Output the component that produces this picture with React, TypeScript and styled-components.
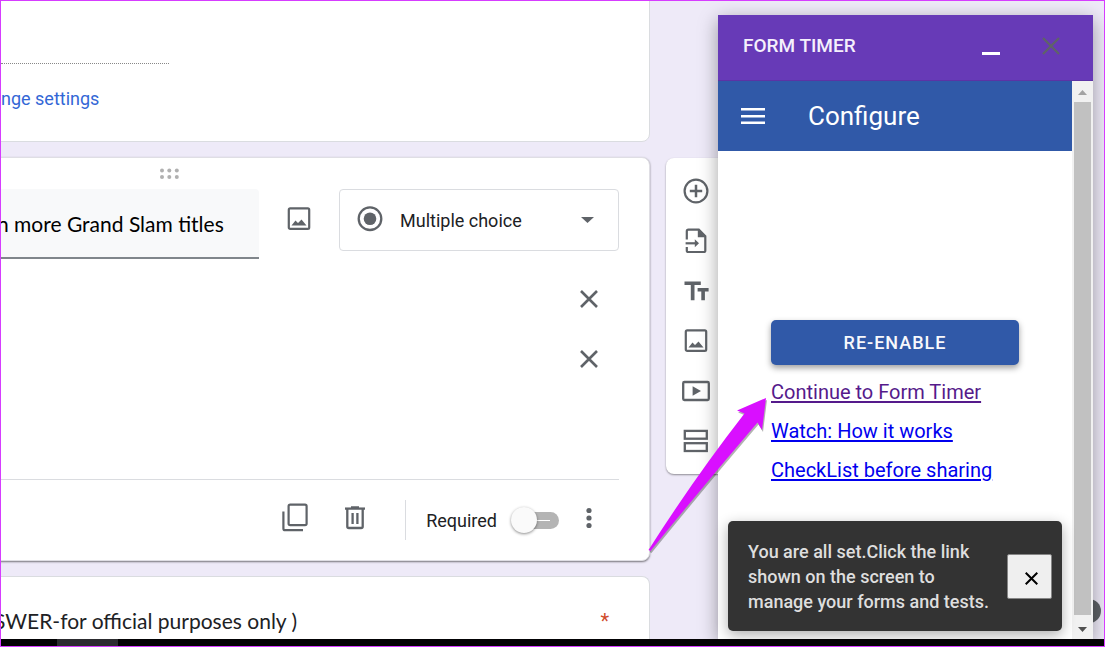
import React from "react";
import styled, { createGlobalStyle } from "styled-components";

const ui = `Roboto, "Liberation Sans", sans-serif`;
const display = `"Google Sans", Lato, "Open Sans", sans-serif`;
const grey = "#5f6368";
const line = "#dadce0";

const GlobalStyle = createGlobalStyle`
  *, *::before, *::after { box-sizing: border-box; }
  body { margin: 0; font-family: ${ui}; color: #202124; }
  button, input, select { font: inherit; color: inherit; }
`;

const Frame = styled.div`
  display: flex;
  flex-direction: column;
  min-height: 100vh;
  border: 1px solid #d63cff;
  overflow: hidden;
`;

const Workspace = styled.main`
  position: relative;
  flex: 1;
  display: grid;
  grid-template-columns: minmax(0, 1fr) 438px;
  column-gap: 16px;
  background: #eeeaf8;
  overflow: hidden;
`;

const FormColumn = styled.div`
  display: flex;
  flex-direction: column;
  gap: 15px;
  margin-left: -8px;
`;

const Card = styled.section<{ $active?: boolean }>`
  background: #fff;
  border: 1px solid ${line};
  border-radius: 8px;
  ${(p) => p.$active && "border-color: #dfdee4; box-shadow: 0 1px 2px rgba(0, 0, 0, 0.5);"}
`;

const SettingsCard = styled(Card)`
  margin-top: -8px;
  padding: 69px 30px 31px 7px;
`;

const AnswerLine = styled.div`
  width: 168px;
  border-bottom: 1px dotted #888;
`;

const SettingsLink = styled.a`
  display: block;
  margin-top: 23px;
  font-size: 18px;
  line-height: 23px;
  color: #3367d6;
  text-decoration: none;
`;

const QuestionCard = styled(Card)`
  padding: 0 30px 0 0;
`;

const DragRow = styled.div`
  display: flex;
  height: 31px;
  padding: 10px 0 0 165px;
`;

const QuestionRow = styled.div`
  display: flex;
  align-items: flex-start;
`;

const QuestionInput = styled.input`
  width: 265px;
  height: 70px;
  padding: 0 0 0 3px;
  border: 0;
  border-bottom: 2px solid #80868b;
  border-radius: 0 4px 0 0;
  background: #f8f9fa;
  color: #000;
  font-family: ${display};
  font-size: 21px;
  outline: 0;
`;

const IconButton = styled.button<{ $w?: number; $h?: number }>`
  display: flex;
  align-items: center;
  justify-content: center;
  width: ${(p) => p.$w ?? 40}px;
  height: ${(p) => p.$h ?? 40}px;
  padding: 0;
  border: 0;
  background: none;
  color: ${grey};
`;

const TypePicker = styled.label`
  display: flex;
  align-items: center;
  flex: 0 0 280px;
  height: 62px;
  margin-left: auto;
  padding: 0 24px 0 17px;
  gap: 17px;
  border: 1px solid ${line};
  border-radius: 4px;
`;

const TypeSelect = styled.select`
  flex: 1;
  min-width: 0;
  padding: 0;
  border: 0;
  appearance: none;
  background: none;
  font-size: 18px;
`;

const Options = styled.div`
  display: flex;
  flex-direction: column;
  align-items: flex-end;
  gap: 20px;
  padding: 20px 10px 100px;
`;

const QuestionFooter = styled.footer`
  display: flex;
  align-items: center;
  justify-content: flex-end;
  height: 81px;
  border-top: 1px solid ${line};
`;

const Separator = styled.span`
  width: 1px;
  height: 40px;
  margin: 0 20px;
  background: ${line};
`;

const RequiredLabel = styled.label`
  display: flex;
  align-items: center;
  gap: 14px;
  font-size: 18px;
`;

const Switch = styled.input`
  appearance: none;
  position: relative;
  width: 48px;
  height: 26px;
  margin: 0;
  &::before {
    content: "";
    position: absolute;
    inset: 5px 0 4px 4px;
    border-radius: 9px;
    background: linear-gradient(#fff, #fff) 21px 8px / 14px 1px no-repeat #b4b4b4;
  }
  &::after {
    content: "";
    position: absolute;
    left: 0;
    top: 0;
    width: 26px;
    height: 26px;
    border-radius: 50%;
    background: #fafafa;
    box-shadow: 0 1px 3px rgba(0, 0, 0, 0.45);
  }
`;

const NextCard = styled(Card)`
  display: flex;
  justify-content: space-between;
  align-items: flex-start;
  flex: 1;
  padding: 30px 40px 0 0;
  border-bottom: 0;
  border-radius: 8px 8px 0 0;
  font-family: ${display};
  font-size: 21px;
  line-height: 28px;
`;

const QuestionTitle = styled.h2`
  margin: 0;
  font: inherit;
`;

const Mark = styled.span`
  font-family: ${ui};
  font-size: 20px;
  color: #d04b2c;
`;

const Rail = styled.nav`
  display: flex;
  flex-direction: column;
  align-items: flex-start;
  align-self: start;
  gap: 10px;
  width: 72px;
  margin-top: 157px;
  padding: 13px 10px;
  border-radius: 8px;
  background: #fff;
  box-shadow: 0 1px 2px rgba(0, 0, 0, 0.4);
`;

const HelpButton = styled.button`
  position: absolute;
  right: 3px;
  bottom: 16px;
  width: 24px;
  height: 24px;
  padding: 0;
  border: 0;
  border-radius: 50%;
  background: ${grey};
`;

const Dialog = styled.aside`
  position: absolute;
  top: 14px;
  right: 11px;
  bottom: 0;
  display: flex;
  flex-direction: column;
  width: 375px;
  background: #fff;
  box-shadow: 0 5px 18px rgba(0, 0, 0, 0.36);
`;

const DialogHeader = styled.header`
  display: flex;
  align-items: center;
  height: 66px;
  padding: 0 12px 3px 25px;
  border-bottom: 1px solid #5c33a5;
  background: #673ab7;
  color: #f5f0fc;
`;

const DialogTitle = styled.h1`
  flex: 1;
  margin: 0;
  font-size: 19px;
  font-weight: 500;
  line-height: 24px;
`;

const DialogBody = styled.div`
  flex: 1;
  display: flex;
  min-height: 0;
`;

const Content = styled.div`
  position: relative;
  flex: 1;
  display: flex;
  flex-direction: column;
`;

const AppBar = styled.div`
  display: flex;
  align-items: center;
  gap: 35px;
  height: 70px;
  padding-left: 15px;
  background: #3059a8;
  color: #fff;
`;

const AppTitle = styled.h2`
  margin: 0;
  font-size: 26px;
  font-weight: 400;
  line-height: 32px;
`;

const Actions = styled.div`
  display: flex;
  flex-direction: column;
  align-items: flex-start;
  padding: 169px 53px 0;
`;

const PrimaryButton = styled.button`
  align-self: stretch;
  height: 45px;
  margin-bottom: 8px;
  border: 0;
  border-radius: 5px;
  background: #3059a8;
  box-shadow: 0 3px 6px rgba(0, 0, 0, 0.38);
  color: #f7f8fc;
  font-size: 18px;
  font-weight: 500;
  letter-spacing: 1px;
`;

const ActionLink = styled.a<{ $visited?: boolean }>`
  font-size: 20px;
  line-height: 39px;
  color: ${(p) => (p.$visited ? "#551a8b" : "#0000ee")};
  text-underline-offset: 2px;
  text-decoration-thickness: 2px;
`;

const Snackbar = styled.div`
  position: absolute;
  left: 10px;
  right: 10px;
  bottom: 8px;
  display: flex;
  align-items: center;
  gap: 12px;
  padding: 18px 10px 17px 20px;
  border-radius: 5px;
  background: #333;
  box-shadow: 0 4px 14px rgba(0, 0, 0, 0.32);
  color: #dedede;
`;

const SnackText = styled.p`
  flex: 1;
  margin: 0;
  font-size: 18px;
  font-weight: 500;
  line-height: 25px;
`;

const SnackClose = styled.button`
  display: flex;
  align-items: center;
  justify-content: center;
  width: 45px;
  height: 45px;
  padding: 4px 0 0 4px;
  border: 1px solid #858585;
  border-radius: 2px;
  background: #efefef;
  color: #000;
`;

const ScrollBar = styled.div`
  display: flex;
  flex-direction: column;
  align-items: center;
  width: 21px;
  background: #f1f1f1;
`;

const ScrollThumb = styled.div`
  flex: 1;
  width: 17px;
  background: #c1c1c1;
`;

const ScrollArrow = styled.svg<{ $h: number }>`
  display: block;
  width: 21px;
  height: ${(p) => p.$h}px;
`;

const Pointer = styled.svg`
  position: absolute;
  top: 389px;
  right: 333px;
`;

const TaskBar = styled.div`
  height: 7px;
  padding-left: 56px;
  background: #030204;
`;

const TaskItem = styled.div`
  width: 61px;
  height: 7px;
  background: #2c2c30;
`;

const Cross = ({ size, width }: { size: number; width: number }) => (
  <svg width={size} height={size} viewBox="0 0 18 18" fill="none" stroke="currentColor" strokeWidth={width}>
    <path d="M1 1 17 17M17 1 1 17" />
  </svg>
);

const ImageIcon = () => (
  <svg width="24" height="24" viewBox="0 0 24 24">
    <rect x="1.8" y="1.4" width="20.4" height="20.4" rx="1.4" fill="none" stroke="currentColor" strokeWidth="2.2" />
    <path d="M4.5 18.5 8.5 13.6 11 16 14.5 12.5 19.5 18.5Z" fill="currentColor" />
  </svg>
);

const AddIcon = () => (
  <svg width="26" height="26" viewBox="0 0 26 26" fill="none" stroke="currentColor">
    <circle cx="13" cy="13" r="11.4" strokeWidth="2.2" />
    <path d="M13 6.8V19.2M6.8 13H19.2" strokeWidth="2.5" />
  </svg>
);

const ImportIcon = () => (
  <svg width="26" height="26" viewBox="0 0 26 26" fill="none" stroke="currentColor" strokeWidth="2.2">
    <path d="M3.8 11.5V3.2Q3.8 1.6 5.4 1.6H15.8L22.3 8.1V22.4Q22.3 24 20.7 24H5.4Q3.8 24 3.8 22.4V19" />
    <path d="M14.8 1.6V9.2H22.3L15.5 1.8Z" fill="currentColor" stroke="none" />
    <path d="M2.6 15.3H13" />
    <path d="M11.8 11.3 16 15.3 11.8 19.3Z" fill="currentColor" stroke="none" />
  </svg>
);

const TextIcon = () => (
  <svg width="26" height="26" viewBox="0 0 26 26" fill="currentColor">
    <path d="M1.5 3.6H17.8V7.1H11.5V22.2H7.8V7.1H1.5ZM14.6 10H25.6V13.4H21.9V22.2H18.3V13.4H14.6Z" />
  </svg>
);

const VideoIcon = () => (
  <svg width="28" height="22" viewBox="0 0 28 22">
    <rect x="1.2" y="2" width="25.6" height="18" rx="1.2" fill="none" stroke="currentColor" strokeWidth="2.3" />
    <path d="M10.6 6.2V15.8L19 11Z" fill="currentColor" />
  </svg>
);

const SectionIcon = () => (
  <svg width="26" height="26" viewBox="0 0 26 26" fill="none" stroke="currentColor" strokeWidth="2.3">
    <rect x="1.8" y="2.9" width="22" height="7.8" />
    <rect x="1.8" y="15.2" width="22" height="7.8" />
  </svg>
);

const railTools = [
  { name: "Add question", icon: <AddIcon /> },
  { name: "Import questions", icon: <ImportIcon /> },
  { name: "Add title", icon: <TextIcon /> },
  { name: "Add image", icon: <ImageIcon /> },
  { name: "Add video", icon: <VideoIcon /> },
  { name: "Add section", icon: <SectionIcon /> },
];

const links = ["Continue to Form Timer", "Watch: How it works", "CheckList before sharing"];

export default function App() {
  return (
    <>
      <GlobalStyle />
      <Frame>
        <Workspace>
          <FormColumn>
            <SettingsCard>
              <AnswerLine />
              <SettingsLink href="#settings">nge settings</SettingsLink>
            </SettingsCard>

            <QuestionCard $active>
              <DragRow>
                <svg width="20" height="12" viewBox="0 0 20 12" fill="#b0b0b0">
                  {[3, 10.3, 17.8].map((x) => (
                    <React.Fragment key={x}>
                      <circle cx={x} cy="2.6" r="2" />
                      <circle cx={x} cy="9" r="2" />
                    </React.Fragment>
                  ))}
                </svg>
              </DragRow>
              <QuestionRow>
                <QuestionInput aria-label="Question" defaultValue="n more Grand Slam titles" />
                <IconButton $w={80} $h={60} aria-label="Add image to question">
                  <ImageIcon />
                </IconButton>
                <TypePicker>
                  <svg width="26" height="28" viewBox="0 0 26 28">
                    <circle cx="13" cy="12.7" r="11.3" fill="none" stroke={grey} strokeWidth="2.3" />
                    <circle cx="13" cy="12.7" r="6.3" fill={grey} />
                  </svg>
                  <TypeSelect aria-label="Question type">
                    <option>Multiple choice</option>
                  </TypeSelect>
                  <svg width="13" height="6" viewBox="0 0 13 6" fill={grey}>
                    <path d="M0 0H13L6.5 6Z" />
                  </svg>
                </TypePicker>
              </QuestionRow>
              <Options>
                <IconButton aria-label="Remove option 1">
                  <Cross size={18} width={2.6} />
                </IconButton>
                <IconButton aria-label="Remove option 2">
                  <Cross size={18} width={2.6} />
                </IconButton>
              </Options>
              <QuestionFooter>
                <IconButton $w={60} aria-label="Duplicate">
                  <svg width="26" height="34" viewBox="0 0 26 34" fill="none" stroke="currentColor" strokeWidth="2.2">
                    <rect x="6.6" y="1.6" width="18" height="20.6" rx="1.6" />
                    <path d="M1.4 8.6V25.4Q1.4 27.2 3.2 27.2H21" />
                  </svg>
                </IconButton>
                <IconButton $w={60} aria-label="Delete">
                  <svg width="22" height="30" viewBox="0 0 22 30" fill="none" stroke="currentColor" strokeWidth="2.3">
                    <path d="M1 3.6H21" />
                    <path d="M7 2.4H15" />
                    <path d="M3.3 4V21.4Q3.3 23 4.9 23H17.1Q18.7 23 18.7 21.4V4" />
                    <path d="M8.6 8V19M13.4 8V19" />
                  </svg>
                </IconButton>
                <Separator />
                <RequiredLabel>
                  Required
                  <Switch type="checkbox" role="switch" />
                </RequiredLabel>
                <IconButton $w={60} aria-label="More options">
                  <svg width="8" height="26" viewBox="0 0 8 26" fill="currentColor">
                    <circle cx="4" cy="3.5" r="2.6" />
                    <circle cx="4" cy="11" r="2.6" />
                    <circle cx="4" cy="18.5" r="2.6" />
                  </svg>
                </IconButton>
              </QuestionFooter>
            </QuestionCard>

            <NextCard>
              <QuestionTitle>SWER-for official purposes only )</QuestionTitle>
              <Mark>*</Mark>
            </NextCard>
          </FormColumn>

          <Rail aria-label="Question tools">
            {railTools.map((tool) => (
              <IconButton key={tool.name} aria-label={tool.name}>
                {tool.icon}
              </IconButton>
            ))}
          </Rail>

          <HelpButton aria-label="Help" />

          <Dialog>
            <DialogHeader>
              <DialogTitle>FORM TIMER</DialogTitle>
              <IconButton $w={60} aria-label="Minimize">
                <svg width="18" height="18" viewBox="0 0 18 18" fill="#fff">
                  <rect x="0" y="15" width="18" height="3" />
                </svg>
              </IconButton>
              <IconButton $w={60} aria-label="Close dialog">
                <Cross size={18} width={2.2} />
              </IconButton>
            </DialogHeader>
            <DialogBody>
              <Content>
                <AppBar>
                  <IconButton aria-label="Menu">
                    <svg width="24" height="18" viewBox="0 0 24 18" fill="#fff">
                      <path d="M0 1H24V3.5H0ZM0 8H24V10.5H0ZM0 14.5H24V17H0Z" />
                    </svg>
                  </IconButton>
                  <AppTitle>Configure</AppTitle>
                </AppBar>
                <Actions>
                  <PrimaryButton>RE-ENABLE</PrimaryButton>
                  {links.map((text, i) => (
                    <ActionLink key={text} href={`#step-${i + 1}`} $visited={i === 0}>
                      {text}
                    </ActionLink>
                  ))}
                </Actions>
                <Snackbar role="status">
                  <SnackText>You are all set.Click the link shown on the screen to manage your forms and tests.</SnackText>
                  <SnackClose aria-label="Dismiss">
                    <Cross size={13} width={2.8} />
                  </SnackClose>
                </Snackbar>
              </Content>
              <ScrollBar>
                <ScrollArrow $h={21} viewBox="0 0 21 21" fill="#a3a3a3">
                  <path d="M6 14 10.5 9 15 14Z" />
                </ScrollArrow>
                <ScrollThumb />
                <ScrollArrow $h={24} viewBox="0 0 21 24" fill="#505050">
                  <path d="M6 12 10.5 17 15 12Z" />
                </ScrollArrow>
              </ScrollBar>
            </DialogBody>
          </Dialog>

          <Pointer width="126" height="168" viewBox="645 390 126 168" aria-hidden="true">
            <g>
              <path
                d="M766 398 737 410.5 744.5 413.5Q695 477 648.5 550L650.5 551Q705 484 757.5 422.5L762 430Z"
                fill="#000"
                opacity="0.3"
                transform="translate(1 2)"
              />
              <path
                d="M766 398 737 410.5 744.5 413.5Q695 477 648.5 550L650.5 551Q705 484 757.5 422.5L762 430Z"
                fill="#d90fff"
              />
            </g>
          </Pointer>
        </Workspace>
        <TaskBar>
          <TaskItem />
        </TaskBar>
      </Frame>
    </>
  );
}
